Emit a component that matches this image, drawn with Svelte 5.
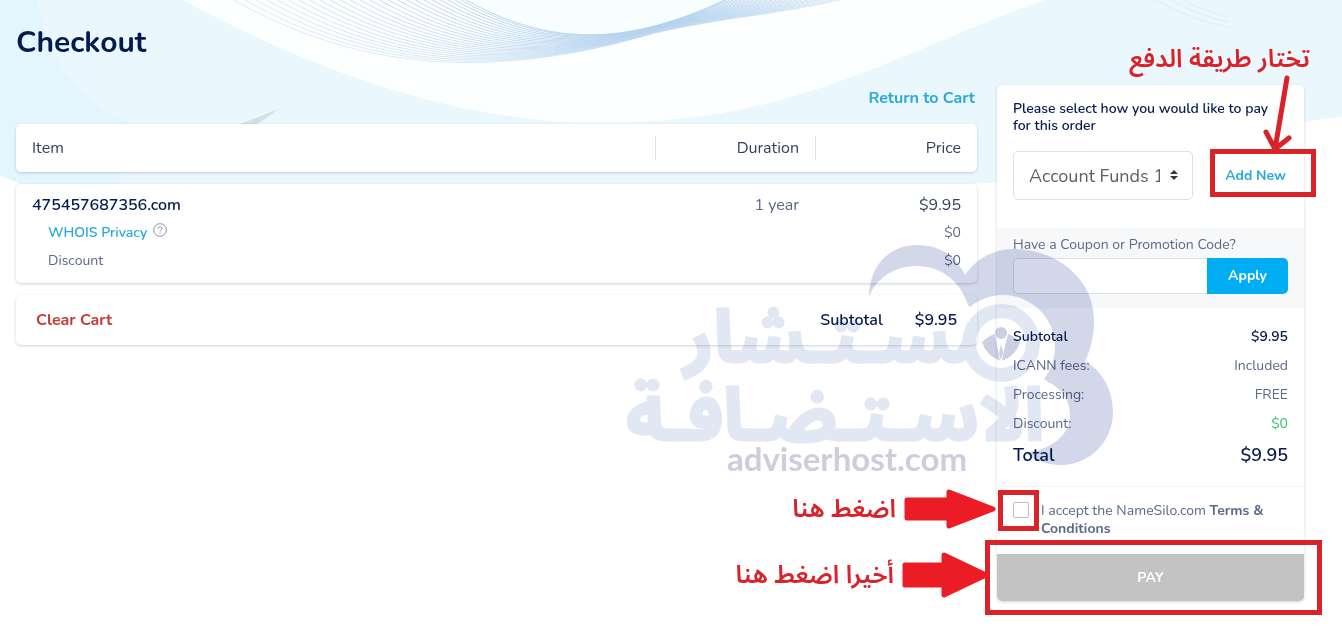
<script>
	let method = $state('Account Funds 1');
	let coupon = $state('');
	let accepted = $state(false);

	const extras = [
		{ label: 'WHOIS Privacy', price: '$0', link: true },
		{ label: 'Discount', price: '$0', link: false }
	];

	const fees = [
		{ label: 'Subtotal', value: '$9.95', kind: 'strong' },
		{ label: 'ICANN fees:', value: 'Included', kind: '' },
		{ label: 'Processing:', value: 'FREE', kind: '' },
		{ label: 'Discount:', value: '$0', kind: 'saving' },
		{ label: 'Total', value: '$9.95', kind: 'total' }
	];

	// The header waves are one curve blended into another
	const from = [466, 0, 530, 36, 590, 43, 655, 26, 680, 19, 702, 11, 724, 0];
	const to = [234, 0, 340, 60, 470, 88, 655, 33, 720, 18, 780, 14, 840, 0];
	const count = 26;
	const waves = Array.from({ length: count }, (_, i) => {
		const t = Math.pow(i / (count - 1), 1.2);
		const p = from.map((v, n) => (v + (to[n] - v) * t).toFixed(1));
		return {
			d: `M${p[0]} ${p[1]}C${p.slice(2, 8).join(' ')}C${p.slice(8).join(' ')}`,
			opacity: 0.9 - t * 0.45
		};
	});
</script>

<div class="page">
	<svg class="hero" viewBox="0 0 1342 190" preserveAspectRatio="none" aria-hidden="true">
		<path d="M0 0H1342V117C1250 124 1130 182 960 184H20Q8 178 0 176Z" fill="#eaf8fd" />
		<path d="M0 0H38C42 50 75 100 130 124L120 184H20Q8 178 0 176Z" fill="#e3f5fd" />
		<path d="M183 0C300 64 450 123 600 123C800 123 900 50 1045 0Z" fill="#fdffff" />
		<path d="M468 0C530 36 590 43 655 26C680 19 702 11 722 0Z" fill="#f8fdff" />
		<path d="M234 126Q262 116 278 109Q262 122 250 128Z" fill="#cfe0e8" />
		<g fill="none" stroke="#b4d2ee">
			{#each waves as wave}
				<path d={wave.d} stroke-opacity={wave.opacity} />
			{/each}
		</g>
		<g fill="none" stroke="#e0eff5">
			<path d="M1156 0Q1190 20 1232 28M1170 0Q1200 16 1228 22M1184 0Q1205 12 1222 15" />
		</g>
	</svg>

	<h1>Checkout</h1>

	<div class="columns">
		<main>
			<a class="return" href="#cart">Return to Cart</a>

			<table>
				<thead class="card">
					<tr>
						<th scope="col">Item</th>
						<th scope="col">Duration</th>
						<th scope="col">Price</th>
					</tr>
				</thead>
				<tbody class="card">
					<tr class="domain">
						<th scope="row">475457687356.com</th>
						<td>1 year</td>
						<td>$9.95</td>
					</tr>
					{#each extras as extra}
						<tr class="extra">
							<td>
								{#if extra.link}
									<a href="#whois">{extra.label}</a>
									<svg class="help" width="14" height="14" viewBox="0 0 14 14" aria-hidden="true">
										<circle cx="7" cy="7" r="6.3" />
										<path d="M5 5.5C5 3.2 9 3.2 9 5.4C9 7 7 6.8 7 8.4M7 9.7V10.8" />
									</svg>
								{:else}
									{extra.label}
								{/if}
							</td>
							<td></td>
							<td>{extra.price}</td>
						</tr>
					{/each}
				</tbody>
			</table>

			<div class="card cart-footer">
				<button type="button" class="clear">Clear Cart</button>
				<span class="sum">Subtotal</span>
				<span class="sum">$9.95</span>
			</div>
		</main>

		<aside>
			<section class="method">
				<label for="method">Please select how you would like to pay for this order</label>
				<div class="method-row">
					<div class="select">
						<select id="method" bind:value={method}>
							<option>Account Funds 1</option>
						</select>
						<svg width="8" height="10" viewBox="0 0 8 10" aria-hidden="true">
							<path d="M4 0L8 4H0ZM4 10L0 6H8Z" fill="#343a40" />
						</svg>
					</div>
					<div class="add">
						<a href="#add">Add New</a>
						<span class="frame"></span>
						<div class="note note-top">
							<p dir="rtl" lang="ar">تختار طريقة الدفع</p>
							<svg width="30" height="78" viewBox="0 0 30 78" aria-hidden="true">
								<path d="M25 3L13 74M4 57L13 74L27 63" />
							</svg>
						</div>
					</div>
				</div>
			</section>

			<section class="coupon">
				<label for="coupon">Have a Coupon or Promotion Code?</label>
				<div class="coupon-row">
					<input id="coupon" type="text" bind:value={coupon} />
					<button type="button">Apply</button>
				</div>
			</section>

			<dl>
				{#each fees as fee}
					<div class={fee.kind}>
						<dt>{fee.label}</dt>
						<dd>{fee.value}</dd>
					</div>
				{/each}
			</dl>

			<section class="terms">
				<div class="check">
					<input id="terms" type="checkbox" bind:checked={accepted} />
					<span class="frame"></span>
					<div class="note note-side">
						<p dir="rtl" lang="ar">اضغط هنا</p>
						<svg width="92" height="40" viewBox="0 0 92 40" aria-hidden="true">
							<path class="solid" d="M3 11H45V3L89 20L45 37V29H3Z" />
						</svg>
					</div>
				</div>
				<label for="terms">I accept the NameSilo.com <a href="#terms">Terms &amp; Conditions</a></label>
			</section>

			<div class="pay">
				<button type="button">PAY</button>
				<span class="frame"></span>
				<div class="note note-side">
					<p dir="rtl" lang="ar">أخيرا اضغط هنا</p>
					<svg width="86" height="46" viewBox="0 0 86 46" aria-hidden="true">
						<path class="solid" d="M3 13H42V3L84 23L42 43V33H3Z" />
					</svg>
				</div>
			</div>
		</aside>
	</div>

	<svg class="watermark" width="510" height="240" viewBox="608 240 510 240" aria-hidden="true">
		<path
			fill="#d2d7ea"
			d="M869 297C869 265 890 245 917 245C940 245 956 256 965 275C977 258 994 249 1013 249C1058 249 1094 280 1094 320C1094 335 1091 349 1085 361C1102 371 1113 390 1113 412C1113 441 1090 465 1061 465C1048 465 1036 461 1025 453C1050 450 1070 436 1070 415C1070 400 1061 388 1048 382L1001 345L968 305C960 280 940 266 917 266C895 266 877 277 869 297Z"
		/>
		<circle cx="1003" cy="347" r="52" fill="#fff" />
		<g class="wordmark" fill="#e1e8f4" stroke="#e1e8f4" stroke-width="3">
			<text x="996" y="362">مسـتـشار</text>
			<text x="1044" y="440">الاسـتـضـافـة</text>
		</g>
		<circle cx="1001" cy="343" r="32" fill="#fff" stroke="#e1e8f4" stroke-width="14" />
		<path fill="#cdcfe3" d="M982 342Q988 336 995 334L1001 361Q986 356 982 342ZM1020 342Q1014 336 1008 334L1001 361Q1016 356 1020 342Z" />
		<path fill="#fff" d="M995 334H1007L1002 361H1000Z" />
		<path fill="#cdcfe3" d="M1001 344L1003 353L1001 360L999 353Z" />
		<circle cx="1001" cy="333" r="6" fill="#cdcfe3" />
		<text class="site" x="847" y="471">adviserhost.com</text>
	</svg>
</div>

<style>
	:global(body) {
		margin: 0;
		background: #fff;
	}

	.page {
		--navy: #031b4e;
		--slate: #5b6987;
		--blue: #27a9dc;
		--red: #d8232a;
		position: relative;
		box-sizing: border-box;
		min-height: 100vh;
		padding: 23px 38px 22px 16px;
		overflow: hidden;
		font-family: Nunito, 'Noto Sans', sans-serif;
		font-size: 14px;
		line-height: 18px;
		color: var(--slate);
	}

	.hero {
		position: absolute;
		top: 0;
		left: 0;
		width: 100%;
		height: 190px;
	}

	h1 {
		position: relative;
		margin: 0 0 22px;
		font-size: 30px;
		line-height: 40px;
		color: var(--navy);
	}

	a {
		color: var(--blue);
		font-weight: 600;
		text-decoration: none;
	}

	button {
		border: 0;
		font: inherit;
		font-weight: 700;
		cursor: pointer;
	}

	.columns {
		position: relative;
		display: grid;
		grid-template-columns: 1fr 307px;
		gap: 20px;
		align-items: start;
	}

	main {
		display: flex;
		flex-direction: column;
		gap: 12px;
	}

	.return {
		align-self: flex-end;
		margin-right: 2px;
		font-size: 16px;
		font-weight: 700;
		line-height: 27px;
	}

	.card {
		background: #fff;
		border-radius: 5px;
		box-shadow: 0 1px 3px rgba(30, 50, 80, 0.22);
	}

	table {
		display: flex;
		flex-direction: column;
		gap: 12px;
	}

	thead,
	tbody {
		display: block;
	}

	thead {
		padding: 12px 0;
		font-size: 16px;
		color: #33415f;
	}

	tbody {
		padding: 7px 0 8px;
	}

	tr {
		display: grid;
		grid-template-columns: 1fr 160px 162px;
	}

	th,
	td {
		padding: 0 16px;
		font-weight: 400;
		line-height: 28px;
		text-align: right;
	}

	thead th {
		line-height: 24px;
	}

	th:first-child,
	td:first-child {
		text-align: left;
	}

	thead th + th {
		border-left: 1px solid #dfe3e8;
	}

	.domain {
		font-size: 16px;
	}

	.domain th {
		font-weight: 600;
		color: var(--navy);
	}

	.domain td:last-child {
		color: #33415f;
	}

	.extra td:first-child {
		padding-left: 32px;
	}

	.help {
		margin-left: 2px;
		fill: none;
		stroke: #8791a5;
	}

	.cart-footer {
		display: flex;
		align-items: center;
		gap: 32px;
		height: 50px;
		padding: 0 20px;
		font-size: 16px;
	}

	.clear {
		margin-right: auto;
		padding: 0;
		background: none;
		color: #c43a35;
	}

	.sum {
		font-weight: 600;
		color: var(--navy);
	}

	aside {
		background: #fff;
		border-radius: 5px;
		box-shadow: 0 1px 3px rgba(30, 50, 80, 0.2);
	}

	.method {
		padding: 15px 16px 28px;
	}

	.method label {
		display: block;
		margin-bottom: 17px;
		font-weight: 600;
		line-height: 17px;
		color: var(--navy);
	}

	.method-row {
		display: flex;
		align-items: center;
		gap: 18px;
	}

	.select {
		position: relative;
		flex: 1;
	}

	.select select {
		display: block;
		box-sizing: border-box;
		width: 100%;
		height: 49px;
		padding: 0 32px 0 15px;
		border: 1px solid #dcdfe4;
		border-radius: 5px;
		appearance: none;
		background: #fff;
		font: inherit;
		font-size: 18px;
		color: #5a6068;
	}

	.select svg {
		position: absolute;
		top: 19px;
		right: 15px;
		pointer-events: none;
	}

	.add {
		position: relative;
		width: 77px;
		text-align: right;
	}

	.add a {
		margin-right: 2px;
		font-weight: 700;
	}

	.coupon {
		padding: 8px 16px 14px;
		background: #f7f8fa;
	}

	.coupon-row {
		display: flex;
		margin-top: 4px;
	}

	.coupon input {
		box-sizing: border-box;
		flex: 1;
		min-width: 0;
		height: 36px;
		border: 1px solid #dcdfe4;
		border-right: 0;
		border-radius: 5px 0 0 5px;
		font: inherit;
	}

	.coupon button {
		width: 81px;
		border-radius: 0 5px 5px 0;
		background: #00adf2;
		color: #fff;
	}

	dl {
		margin: 0;
		padding: 14px 16px;
	}

	dl div {
		display: flex;
		justify-content: space-between;
		line-height: 29px;
	}

	dd {
		margin: 0;
	}

	dl .strong {
		font-weight: 600;
		color: var(--navy);
	}

	dl .saving dd {
		color: #35c26b;
	}

	dl .total {
		font-size: 18px;
		font-weight: 600;
		line-height: 34px;
		color: var(--navy);
	}

	.terms {
		display: flex;
		gap: 12px;
		padding: 15px 16px 16px;
		border-top: 1px solid #f4f5f7;
	}

	.terms a {
		color: var(--slate);
		font-weight: 700;
	}

	.check {
		position: relative;
		width: 16px;
		height: 16px;
	}

	.check input {
		display: block;
		width: 16px;
		height: 16px;
		margin: 0;
		border: 1px solid #b8bfca;
		border-radius: 2px;
		appearance: none;
		background: #fff;
	}

	.check input:checked {
		background: var(--blue);
	}

	.pay {
		position: relative;
	}

	.pay button {
		display: block;
		width: 100%;
		height: 47px;
		border-radius: 0 0 5px 5px;
		background: #c3c3c3;
		color: #fff;
	}

	/* Red call-outs drawn over the form */
	.frame {
		position: absolute;
		border: 5px solid var(--red);
		pointer-events: none;
	}

	.add .frame {
		inset: -18px -28px -12px -1px;
	}

	.check .frame {
		inset: -12px -10px -13px -15px;
	}

	.pay .frame {
		inset: -14px -18px -14px -12px;
	}

	.note {
		position: absolute;
		display: flex;
		z-index: 1;
		font-family: 'Noto Sans Arabic', sans-serif;
		font-size: 25px;
		font-weight: 600;
		line-height: 32px;
		color: var(--red);
		white-space: nowrap;
		pointer-events: none;
	}

	.note p {
		margin: 0;
	}

	.note path {
		fill: none;
		stroke: var(--red);
		stroke-width: 5;
		stroke-linecap: round;
		stroke-linejoin: round;
	}

	.note .solid {
		fill: #ec1c24;
		stroke: #ec1c24;
	}

	.note-top {
		right: -22px;
		bottom: 32px;
		flex-direction: column;
		align-items: flex-end;
	}

	.note-top svg {
		margin-right: 18px;
	}

	.note-side {
		top: 44%;
		right: 100%;
		align-items: center;
		gap: 8px;
		transform: translateY(-50%);
	}

	.check .note-side {
		margin-right: 17px;
	}

	.pay .note-side {
		margin-right: 9px;
	}

	.watermark {
		position: absolute;
		top: 240px;
		right: 224px;
		overflow: visible;
		mix-blend-mode: multiply;
		pointer-events: none;
	}

	.wordmark {
		direction: rtl;
		font-family: 'Noto Sans Arabic', sans-serif;
		font-size: 72px;
		font-weight: 700;
	}

	.site {
		fill: #cfcddd;
		font-family: Lato, 'Open Sans', sans-serif;
		font-size: 33px;
		font-weight: 700;
		text-anchor: middle;
	}
</style>
